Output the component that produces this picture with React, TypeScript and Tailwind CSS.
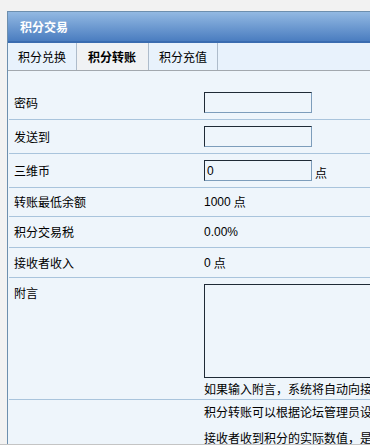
import React from 'react';

const cn = '"Noto Sans CJK SC", "Liberation Sans", sans-serif';
const num = '"Liberation Sans", "Noto Sans CJK SC", sans-serif';

function Row({ label, children, h }: { label: string; children?: React.ReactNode; h: string }) {
  return (
    <div className={`flex items-center border-b border-[#a9c4dc] ${h}`}>
      <div className="w-[195px] pl-[5px] shrink-0">{label}</div>
      <div className="flex items-center">{children}</div>
    </div>
  );
}

function Field({ value }: { value?: string }) {
  return (
    <input
      type="text"
      defaultValue={value}
      className="w-[108px] h-[21px] border border-t-[#1f2a36] border-l-[#1f2a36] border-b-[#7d9dbb] border-r-[#7d9dbb] bg-[#eef5fb] px-[2px] text-[12px] outline-none"
      style={{ fontFamily: num }}
    />
  );
}

export default function App() {
  return (
    <div className="w-[370px] h-[445px] flex flex-col bg-[#f2f2f2]" style={{ fontFamily: cn }}>
      <div className="h-[444px] overflow-hidden pt-[11px] pl-[7px]">
        {/* Panel */}
        <div className="w-[620px] h-[600px] border border-[#6d8fae] bg-[#eef5fb] text-[12px] text-black">
          {/* Header */}
          <div className="h-[31px] flex items-center pl-[12px] bg-gradient-to-b from-[#93b9e2] to-[#4a7dc0] border-b-2 border-[#3a6cb0] text-white font-bold text-[12px]">
            积分交易
          </div>

          {/* Tabs */}
          <div className="flex h-[28px] bg-[#e8f2fc] border-b border-[#a2a8ae]">
            <div className="flex items-center pt-[1px] px-[10px] border-r border-[#aebccb]">积分兑换</div>
            <div className="flex items-center pt-[1px] pl-[11px] pr-[12px] border-r border-[#aebccb] bg-[#f0f2f4] font-bold">积分转账</div>
            <div className="flex items-center pt-[1px] px-[10px] border-r border-[#aebccb]">积分充值</div>
          </div>

          {/* Form */}
          <div className="ml-[1px] pt-[15px]">
            <Row label="密码" h="h-[34px]">
              <Field />
            </Row>
            <Row label="发送到" h="h-[34px]">
              <Field />
            </Row>
            <Row label="三维币" h="h-[34px]">
              <Field value="0" />
              <span className="ml-[3px] mt-[4px]">点</span>
            </Row>
            <Row label="转账最低余额" h="h-[29px]">
              <span style={{ fontFamily: num }}>1000</span>
              <span className="ml-[3px]">点</span>
            </Row>
            <Row label="积分交易税" h="h-[31px]">
              <span style={{ fontFamily: num }}>0.00%</span>
            </Row>
            <Row label="接收者收入" h="h-[30px]">
              <span style={{ fontFamily: num }}>0</span>
              <span className="ml-[3px]">点</span>
            </Row>

            <div className="flex border-b border-[#a9c4dc] h-[122px] pt-[6px]">
              <div className="w-[195px] pl-[5px] shrink-0 leading-[14px] pt-[2px]">附言</div>
              <div className="flex flex-col">
                <textarea className="w-[300px] h-[94px] border border-[#1f2a36] bg-[#eef5fb] resize-none outline-none" />
                <div className="mt-[3px] leading-[16px] whitespace-nowrap">如果输入附言，系统将自动向接收者发送短消息通知</div>
              </div>
            </div>

            <div className="flex pt-[3px]">
              <div className="w-[195px] shrink-0" />
              <div className="leading-[18px] whitespace-nowrap">
                <div>积分转账可以根据论坛管理员设定的积分交易税计算，</div>
                <div className="mt-[8px]">接收者收到积分的实际数值，是扣除交易税之后的数值。</div>
              </div>
            </div>
          </div>
        </div>
      </div>
      <div className="h-[1px] bg-[#c4c4c4]" />
    </div>
  );
}
